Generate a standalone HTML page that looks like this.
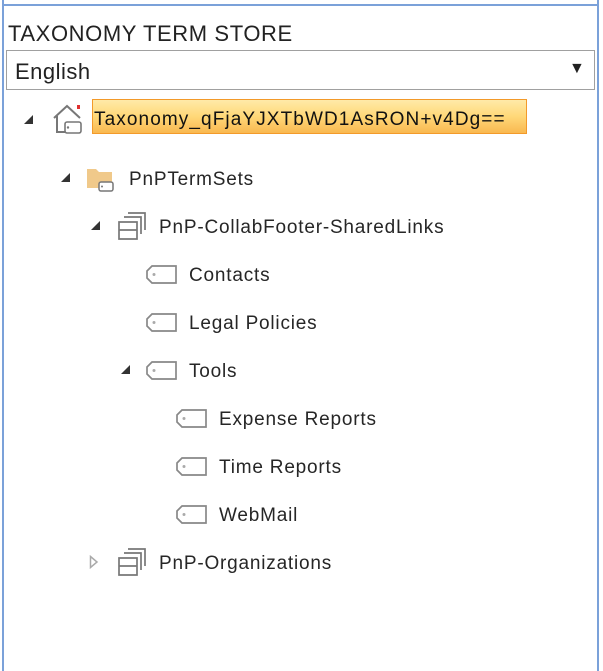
<!DOCTYPE html>
<html><head><style>
body{margin:0;width:603px;height:671px;background:#fff;position:relative;overflow:hidden;font-family:"Liberation Sans",sans-serif;color:#222}
.a{position:absolute}
.t{position:absolute;font-size:19px;line-height:24px;white-space:nowrap;color:#262626;letter-spacing:0.8px;margin-top:2px}
.tri{position:absolute;width:0;height:0;border-left:9px solid transparent;border-bottom:9px solid #333}
</style></head><body>
<div class="a" style="left:2px;top:0;width:2px;height:671px;background:#7ba1d9"></div>
<div class="a" style="left:597px;top:0;width:2px;height:671px;background:#7ba1d9"></div>
<div class="a" style="left:2px;top:4px;width:597px;height:2px;background:#7ba1d9"></div>
<div class="a" style="left:8px;top:21px;font-size:22px;color:#222;letter-spacing:0.6px">TAXONOMY TERM STORE</div>
<div class="a" style="left:6px;top:50px;width:587px;height:38px;border:1px solid #a0a0a0"></div>
<div class="a" style="left:15px;top:59px;font-size:22px;color:#222;letter-spacing:0.5px">English</div>
<div class="a" style="left:569px;top:60px;font-size:16px;color:#222">▼</div>

<div class="tri" style="left:24px;top:115px"></div>
<svg class="a" style="left:52px;top:102px" width="32" height="34" viewBox="0 0 32 34"><path d="M2 16 L15 4 L28 16 M5 14 V30 H15" fill="none" stroke="#777" stroke-width="2"/><rect x="13" y="20" width="16" height="11" rx="2" fill="#fff" stroke="#777" stroke-width="1.6"/><circle cx="16" cy="25.5" r="1.2" fill="#777"/><rect x="25" y="3" width="3" height="4" fill="#e03030"/></svg>
<div class="a" style="left:92px;top:99px;width:433px;height:33px;border:1px solid #f39a2a;background:linear-gradient(#ffeaa8,#ffd878 50%,#f9b850)"></div>
<div class="t" style="left:94px;top:106px;color:#111;font-size:19px;letter-spacing:1.1px">Taxonomy_qFjaYJXTbWD1AsRON+v4Dg==</div>

<div class="tri" style="left:61px;top:173px"></div>
<svg class="a" style="left:86px;top:165px" width="34" height="30" viewBox="0 0 34 30"><path d="M1 4 H10 L13 7 H26 V23 H1 Z" fill="#f0c98a"/><rect x="13" y="17" width="14" height="9" rx="2" fill="#fff" stroke="#777" stroke-width="1.5"/><circle cx="16" cy="21.5" r="1" fill="#777"/></svg>
<div class="t" style="left:129px;top:166px">PnPTermSets</div>

<div class="tri" style="left:91px;top:221px"></div>
<svg class="a" style="left:115px;top:211px" width="36" height="32" viewBox="0 0 36 32"><g fill="none" stroke="#777" stroke-width="1.7"><path d="M13 2 H30 V19"/><path d="M9 6 H26 V23"/><path d="M4 11 H22 V28 H4 Z"/><path d="M4 19 H22"/></g></svg>
<div class="t" style="left:159px;top:214px">PnP-CollabFooter-SharedLinks</div>

<div class="tri" style="left:121px;top:365px"></div>

<div class="t" style="left:189px;top:262px">Contacts</div>
<div class="t" style="left:189px;top:310px">Legal Policies</div>
<div class="t" style="left:189px;top:358px">Tools</div>
<div class="t" style="left:219px;top:406px">Expense Reports</div>
<div class="t" style="left:219px;top:454px">Time Reports</div>
<div class="t" style="left:219px;top:502px">WebMail</div>

<svg class="a" style="left:146px;top:264px" width="32" height="21" viewBox="0 0 32 21"><path d="M1 7 L6 2 H30 V19 H6 L1 14 Z" fill="#fff" stroke="#888" stroke-width="1.7"/><circle cx="8" cy="10.5" r="1.5" fill="#aaa"/></svg>
<svg class="a" style="left:146px;top:312px" width="32" height="21" viewBox="0 0 32 21"><path d="M1 7 L6 2 H30 V19 H6 L1 14 Z" fill="#fff" stroke="#888" stroke-width="1.7"/><circle cx="8" cy="10.5" r="1.5" fill="#aaa"/></svg>
<svg class="a" style="left:146px;top:360px" width="32" height="21" viewBox="0 0 32 21"><path d="M1 7 L6 2 H30 V19 H6 L1 14 Z" fill="#fff" stroke="#888" stroke-width="1.7"/><circle cx="8" cy="10.5" r="1.5" fill="#aaa"/></svg>
<svg class="a" style="left:176px;top:408px" width="32" height="21" viewBox="0 0 32 21"><path d="M1 7 L6 2 H30 V19 H6 L1 14 Z" fill="#fff" stroke="#888" stroke-width="1.7"/><circle cx="8" cy="10.5" r="1.5" fill="#aaa"/></svg>
<svg class="a" style="left:176px;top:456px" width="32" height="21" viewBox="0 0 32 21"><path d="M1 7 L6 2 H30 V19 H6 L1 14 Z" fill="#fff" stroke="#888" stroke-width="1.7"/><circle cx="8" cy="10.5" r="1.5" fill="#aaa"/></svg>
<svg class="a" style="left:176px;top:504px" width="32" height="21" viewBox="0 0 32 21"><path d="M1 7 L6 2 H30 V19 H6 L1 14 Z" fill="#fff" stroke="#888" stroke-width="1.7"/><circle cx="8" cy="10.5" r="1.5" fill="#aaa"/></svg>

<svg class="a" style="left:89px;top:555px" width="10" height="14" viewBox="0 0 10 14"><path d="M1.5 1.5 L8 7 L1.5 12.5 Z" fill="none" stroke="#aaa" stroke-width="1.5"/></svg>
<svg class="a" style="left:115px;top:547px" width="36" height="32" viewBox="0 0 36 32"><g fill="none" stroke="#777" stroke-width="1.7"><path d="M13 2 H30 V19"/><path d="M9 6 H26 V23"/><path d="M4 11 H22 V28 H4 Z"/><path d="M4 19 H22"/></g></svg>
<div class="t" style="left:159px;top:550px">PnP-Organizations</div>
</body></html>
